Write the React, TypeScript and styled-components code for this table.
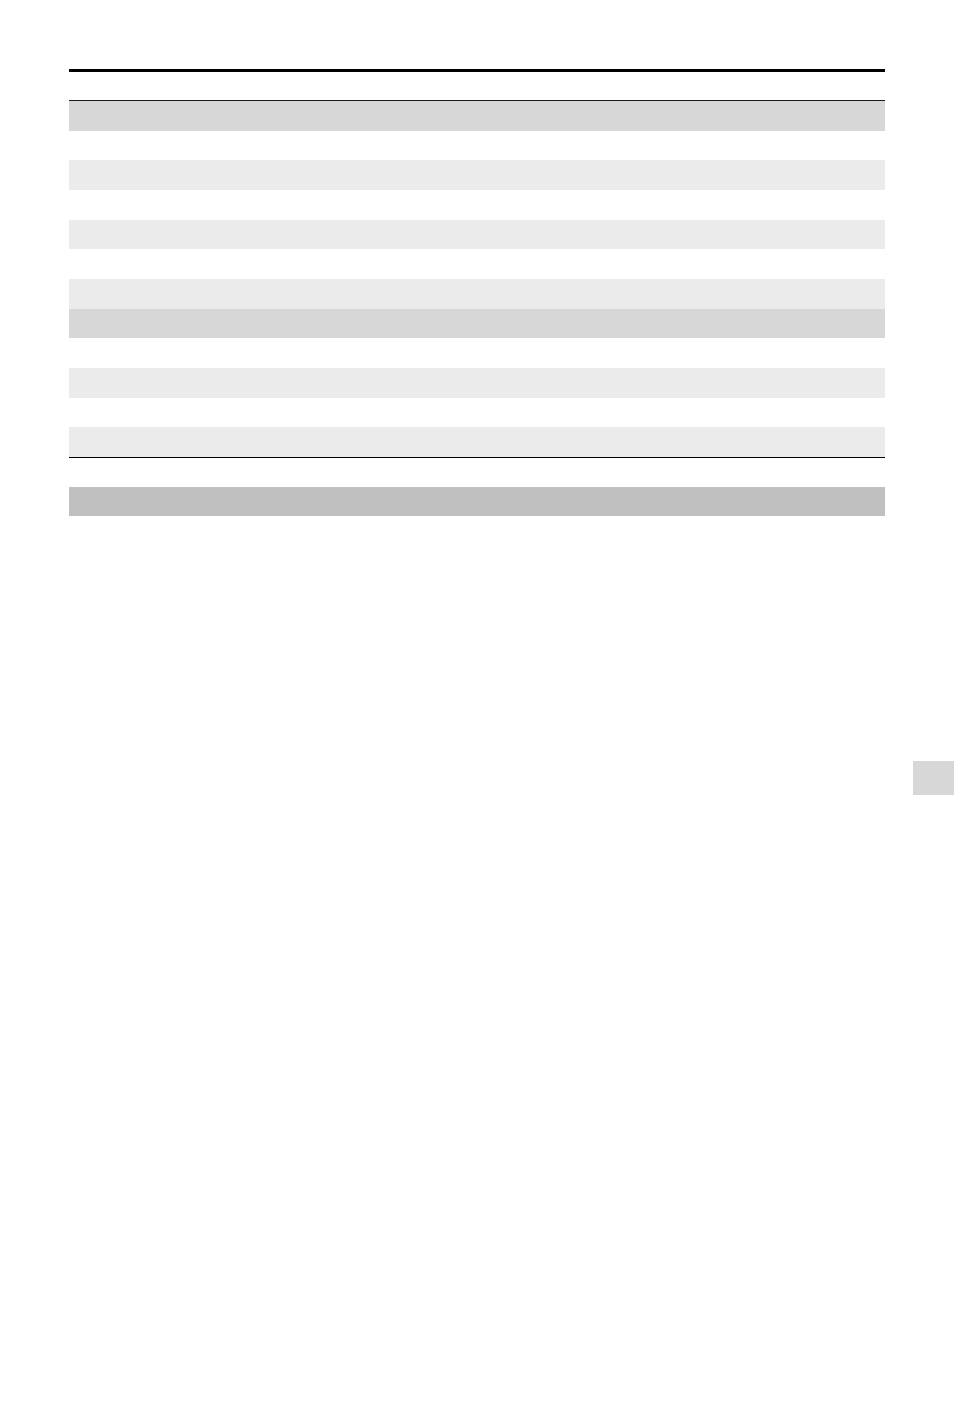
import React from 'react';
import styled, { createGlobalStyle } from 'styled-components';

type RowKind = 'head' | 'plain' | 'shaded';

const GlobalStyle = createGlobalStyle`
  html, body {
    margin: 0;
    padding: 0;
    background: #ffffff;
    font-family: 'Liberation Sans', Arial, sans-serif;
  }
`;

const Page = styled.div`
  position: relative;
  width: 954px;
  height: 1418px;
  padding: 69px 0 0 69px;
  box-sizing: border-box;
  background: #ffffff;
`;

const Column = styled.div`
  width: 816px;
  display: flex;
  flex-direction: column;
`;

const TopRule = styled.div`
  height: 3px;
  background: #000000;
  margin-bottom: 28px;
`;

const Table = styled.div`
  display: flex;
  flex-direction: column;
  border-top: 1px solid #1a1a1a;
  border-bottom: 1px solid #000000;
`;

const rowColours: Record<RowKind, string> = {
  head: '#d7d7d7',
  plain: '#ffffff',
  shaded: '#eaebea',
};

const Row = styled.div<{ $kind: RowKind }>`
  height: 29.67px;
  background: ${({ $kind }) => rowColours[$kind]};
`;

const FooterBar = styled.div`
  margin-top: 29px;
  height: 29px;
  background: #bfc0bf;
`;

// Thumb-index tab sitting on the page's right edge
const EdgeTab = styled.div`
  position: absolute;
  top: 761px;
  right: 0;
  width: 41px;
  height: 34px;
  background: #d7d7d7;
`;

const rows: RowKind[] = [
  'head',
  'plain',
  'shaded',
  'plain',
  'shaded',
  'plain',
  'shaded',
  'head',
  'plain',
  'shaded',
  'plain',
  'shaded',
];

const App: React.FC = () => (
  <>
    <GlobalStyle />
    <Page>
      <Column>
        <TopRule />
        <Table>
          {rows.map((kind, i) => (
            <Row key={i} $kind={kind} />
          ))}
        </Table>
        <FooterBar />
      </Column>
      <EdgeTab />
    </Page>
  </>
);

export default App;
